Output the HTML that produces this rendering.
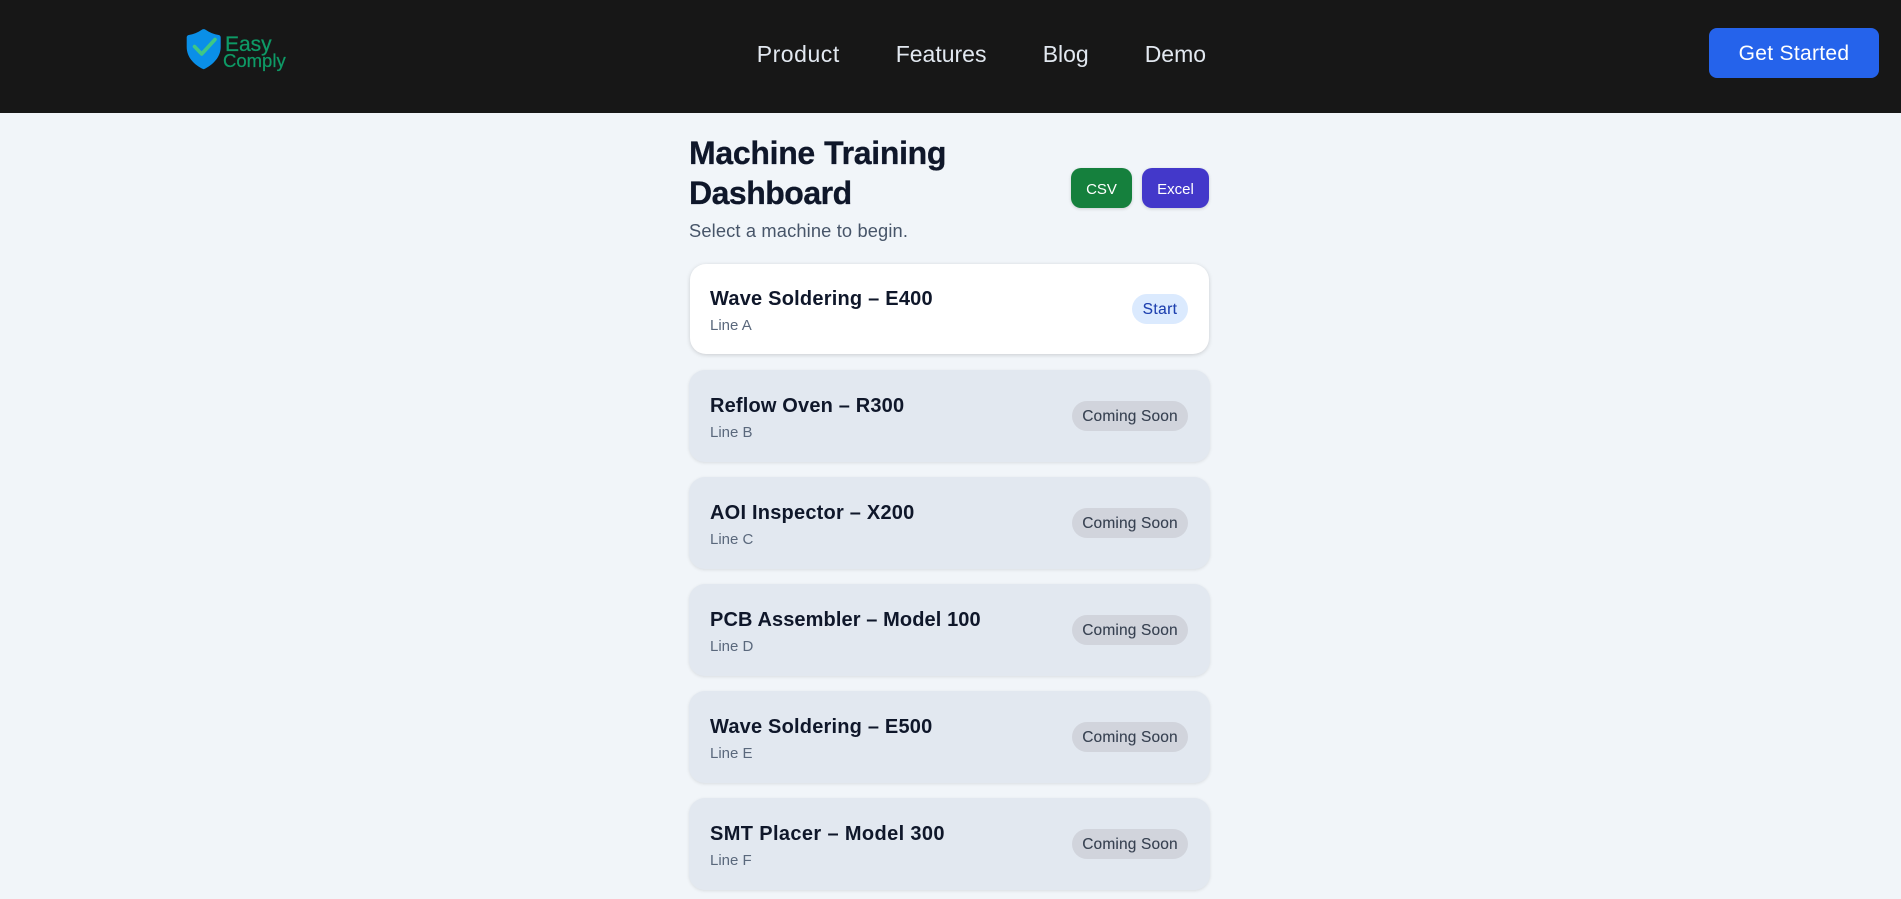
<!DOCTYPE html>
<html lang="en">
<head>
<meta charset="utf-8">
<title>Machine Training Dashboard</title>
<style>
html,body{margin:0;padding:0;width:1901px;height:899px;overflow:hidden;background:#f1f5f9;font-family:"Liberation Sans",Arial,sans-serif}
.a{position:absolute;white-space:nowrap}
header{position:absolute;left:0;top:0;width:1901px;height:113px;background:#171717}
.nav{font-size:23px;line-height:30px;top:39px;color:#e2e8f0}
.cta{left:1709px;top:28px;width:170px;height:50px;border-radius:8px;background:#2563eb;color:#fff;font-size:21px;letter-spacing:.3px;display:flex;align-items:center;justify-content:center;padding-top:2px;height:48px}
h1{margin:0;font-size:32px;line-height:40px;font-weight:700;color:#0f172a;letter-spacing:-.5px;-webkit-text-stroke:.3px #0f172a}
.btn{top:168px;height:38px;padding-top:2px;border-radius:10px;color:#fff;font-size:15px;display:flex;align-items:center;justify-content:center;box-shadow:0 1px 3px rgba(0,0,0,.16)}
.card{left:688.5px;width:521px;height:92px;border-radius:16px;background:#e2e8f0;box-shadow:0 1px 3px rgba(0,0,0,.1)}
.t{left:710px;font-size:20px;line-height:24px;font-weight:700;color:#0f172a}
.l{left:710px;font-size:15px;line-height:20px;color:#5a687c}
.b{right:713px;height:28px;padding-top:2px;border-radius:15px;font-size:15.5px;letter-spacing:.15px;display:flex;align-items:center;justify-content:center;-webkit-text-stroke:.1px currentColor}
.s{width:116px;background:#d1d4dc;color:#374151}
</style>
</head>
<body>
<header>
<svg class="a" style="left:0;top:0" width="300" height="113" viewBox="0 0 300 113">
<path d="M201.8 29.7C202.9 29 204.5 29 205.6 29.7C209.5 32.4 213.8 34.2 218.6 35C219.9 35.2 220.7 36.2 220.7 37.4V47C220.7 57 213 65 203.7 69.3C194 65 186.7 57 186.7 47V37.4C186.7 36.2 187.5 35.2 188.8 35C193.6 34.2 197.9 32.4 201.8 29.7Z" fill="#0a8fe8"/>
<path d="M194.5 46.5L201.7 54L215 39.5" fill="none" stroke="#3fc785" stroke-width="3.6" stroke-linecap="round" stroke-linejoin="round"/>
</svg>
<div class="a" style="left:225px;top:32px;font-size:21px;line-height:26px;color:#0e9a66;-webkit-text-stroke:.25px #0e9a66">Easy</div>
<div class="a" style="left:223px;top:48px;font-size:18.5px;line-height:26px;color:#0e9a66;-webkit-text-stroke:.25px #0e9a66">Comply</div>
<div class="a nav" style="left:756.7px;letter-spacing:.55px">Product</div>
<div class="a nav" style="left:895.7px">Features</div>
<div class="a nav" style="left:1042.7px">Blog</div>
<div class="a nav" style="left:1144.7px">Demo</div>
<div class="a cta">Get Started</div>
</header>

<h1 class="a" style="left:689px;top:133px;letter-spacing:-.3px;word-spacing:.6px">Machine Training</h1>
<h1 class="a" style="left:689px;top:173px">Dashboard</h1>
<div class="a" style="left:689px;top:219px;font-size:18.3px;line-height:24px;letter-spacing:.14px;color:#475569">Select a machine to begin.</div>
<div class="a btn" style="left:1071px;width:61px;background:#15803d">CSV</div>
<div class="a btn" style="left:1142px;width:67px;background:#4338ca">Excel</div>

<div class="a card" style="left:690px;top:264px;width:519px;height:90px;background:#fff;box-shadow:0 1px 4px rgba(0,0,0,.17)"></div>
<div class="a t" style="top:287px;letter-spacing:.22px">Wave Soldering – E400</div>
<div class="a l" style="top:316px">Line A</div>
<div class="a b" style="top:294px;width:56px;background:#dbeafe;color:#1e40af;letter-spacing:.4px">Start</div>

<div class="a card" style="top:370px"></div>
<div class="a t" style="top:394px;letter-spacing:.17px">Reflow Oven – R300</div>
<div class="a l" style="top:423px">Line B</div>
<div class="a b s" style="top:401px">Coming Soon</div>

<div class="a card" style="top:477px"></div>
<div class="a t" style="top:501px;letter-spacing:.22px">AOI Inspector – X200</div>
<div class="a l" style="top:530px">Line C</div>
<div class="a b s" style="top:508px">Coming Soon</div>

<div class="a card" style="top:584px"></div>
<div class="a t" style="top:608px;letter-spacing:.1px">PCB Assembler – Model 100</div>
<div class="a l" style="top:637px">Line D</div>
<div class="a b s" style="top:615px">Coming Soon</div>

<div class="a card" style="top:691px"></div>
<div class="a t" style="top:715px;letter-spacing:.2px">Wave Soldering – E500</div>
<div class="a l" style="top:744px">Line E</div>
<div class="a b s" style="top:722px">Coming Soon</div>

<div class="a card" style="top:798px"></div>
<div class="a t" style="top:822px;letter-spacing:.37px">SMT Placer – Model 300</div>
<div class="a l" style="top:851px">Line F</div>
<div class="a b s" style="top:829px">Coming Soon</div>
</body>
</html>
